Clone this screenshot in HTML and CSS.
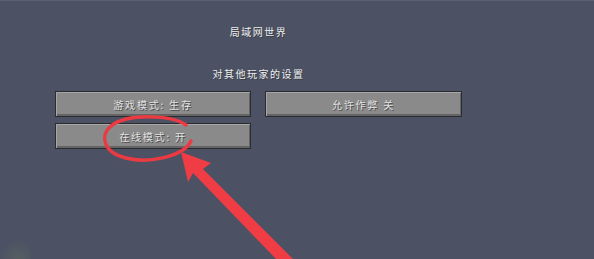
FILE: index.html
```html
<!DOCTYPE html>
<html lang="zh-CN">

<head>
    <meta charset="UTF-8">
    <title>局域网世界</title>
    <link rel="stylesheet" href="styles.css">
</head>

<body>
    <div class="screen">
        <h1 class="title">局域网世界</h1>
        <h2 class="subtitle">对其他玩家的设置</h2>
        <div class="options">
            <button class="mc-btn">游戏模式: 生存</button>
            <button class="mc-btn">允许作弊 关</button>
            <button class="mc-btn">在线模式: 开</button>
        </div>
        <div class="plant"></div>
        <svg class="mark" width="594" height="259" viewBox="0 0 594 259">
            <path d="M186 124 C172 114 128 112 111 125 C99 135 104 152 126 157 C150 163 184 155 191 140"
                fill="none" stroke="#ec3a42" stroke-width="3.5" stroke-linecap="round" />
            <polygon points="181,151 211,162 203,168 294,259 277,259 193,172 188,181" fill="#f03c44" />
        </svg>
    </div>
</body>

</html>
```

FILE: styles.css
```css
body {
    margin: 0;
    padding: 0;
    background-color: #4c5264;
    font-family: "Noto Sans CJK SC", "Noto Sans", sans-serif;
    overflow: hidden;
}

.screen {
    position: relative;
    height: 259px;
    border-top: 1px solid #5a6072;
    box-sizing: border-box;
}

.title,
.subtitle {
    margin: 0;
    font-size: 10px;
    font-weight: normal;
    letter-spacing: 1.5px;
    color: #eeeeee;
    text-align: center;
    width: 407px;
    margin-left: 55px;
    text-shadow: 1px 1px 0 #3a3d47;
}

.title {
    padding-top: 24px;
    line-height: 14px;
}

.subtitle {
    padding-top: 28px;
    line-height: 14px;
}

.options {
    display: grid;
    grid-template-columns: 196px 197px;
    column-gap: 14px;
    row-gap: 6px;
    margin-left: 55px;
    margin-top: 10px;
}

.mc-btn {
    height: 26px;
    padding: 0;
    background-color: #8a8a8a;
    border: 1px solid #2b2c30;
    box-shadow: inset 1px 1px 0 #a6a6a6, inset -1px -2px 0 #646464;
    color: #e2e2e2;
    font-family: "Noto Sans CJK SC", "Noto Sans", sans-serif;
    font-size: 10px;
    letter-spacing: 1.8px;
    text-shadow: 1px 1px 0 #4a4a4a;
}

.plant {
    position: absolute;
    left: 0;
    bottom: 0;
    width: 30px;
    height: 20px;
    background: radial-gradient(ellipse at 60% 100%, rgba(100, 120, 90, 0.35), rgba(76, 82, 100, 0) 70%);
}

.mark {
    position: absolute;
    left: 0;
    top: 0;
}
```
